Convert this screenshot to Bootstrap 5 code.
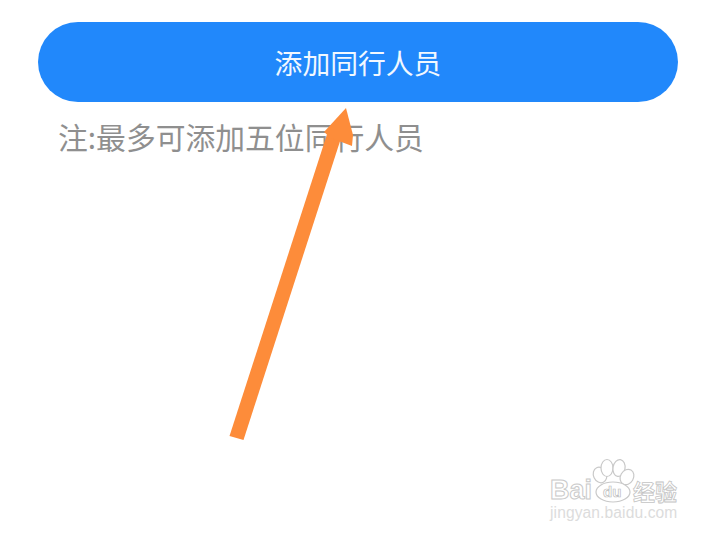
<!DOCTYPE html>
<html lang="zh">
<head>
<meta charset="utf-8">
<link href="https://cdn.jsdelivr.net/npm/bootstrap@5.3.0/dist/css/bootstrap.min.css" rel="stylesheet">
<style>
html,body{height:100%;margin:0;background:#fff;overflow:hidden}
body{font-family:"Noto Sans CJK SC","Liberation Sans",sans-serif}
.page-wrap{padding:22px 38px 0;position:relative;height:537px}
.add-btn{display:block;width:640px;height:80px;border:0;background:#2188fb;color:#f2f8ff;font-size:27.800px;line-height:80px;padding:0;border-radius:40px;text-align:center}
.add-btn:hover,.add-btn:active{background:#2188fb!important;color:#f2f8ff!important}
.note-line{margin:13px 0 0 20px;font-size:29.800px;line-height:42px;color:#8f8f8f;white-space:nowrap}
.arrow-over{position:absolute;left:0;top:0;width:716px;height:537px;pointer-events:none}
.wm{position:absolute;left:548px;top:458px;width:135px;height:66px;color:#fff}
.wm svg{position:absolute;left:0;top:0}
.wm-bai{position:absolute;left:2px;top:17px;font:700 27px/30px "Liberation Sans",sans-serif;color:#fff;-webkit-text-stroke:1px #c9c9c9}
.wm-du{position:absolute;left:55px;top:26px;font:700 15px/16px "Liberation Sans",sans-serif;color:#fff;-webkit-text-stroke:.7px #bdbdbd}
.wm-cn{position:absolute;left:85px;top:19px;font:700 22px/26px "Noto Sans CJK SC",sans-serif;color:#fff;-webkit-text-stroke:.8px #c4c4c4;white-space:nowrap}
.wm-url{position:absolute;left:2px;top:46px;font:400 15.600px/18px "Liberation Sans",sans-serif;color:#dcdcdc;letter-spacing:.1px;white-space:nowrap}
</style>
</head>
<body>
<div class="page-wrap">
  <button type="button" class="btn add-btn">添加同行人员</button>
  <p class="note-line">注:最多可添加五位同行人员</p>
  <svg class="arrow-over" viewBox="0 0 716 537" aria-hidden="true">
    <path d="M229.500 436 L329 128 L343 132 L243.500 440 Z" fill="#fd8c3a"/>
    <path d="M346 108 L324 132 L331 138 L352 146 L353 135 Z" fill="#fd8c3a"/>
  </svg>
  <div class="wm">
    <svg width="135" height="66" viewBox="0 0 135 66" aria-hidden="true">
      <g fill="#fff" stroke="#c9c9c9" stroke-width="1.200">
        <ellipse cx="52" cy="17" rx="6.500" ry="8" transform="rotate(-25 52 17)"/>
        <ellipse cx="59" cy="10" rx="6" ry="8.500"/>
        <ellipse cx="71" cy="10" rx="6" ry="8.500" transform="rotate(10 71 10)"/>
        <ellipse cx="79" cy="19" rx="6.500" ry="8" transform="rotate(30 79 19)"/>
        <ellipse cx="65" cy="34" rx="17" ry="10"/>
      </g>
    </svg>
    <span class="wm-bai">Bai</span>
    <span class="wm-du">du</span>
    <span class="wm-cn">经验</span>
    <span class="wm-url">jingyan.baidu.com</span>
  </div>
</div>
<script src="https://cdn.jsdelivr.net/npm/bootstrap@5.3.0/dist/js/bootstrap.bundle.min.js"></script>
</body>
</html>
